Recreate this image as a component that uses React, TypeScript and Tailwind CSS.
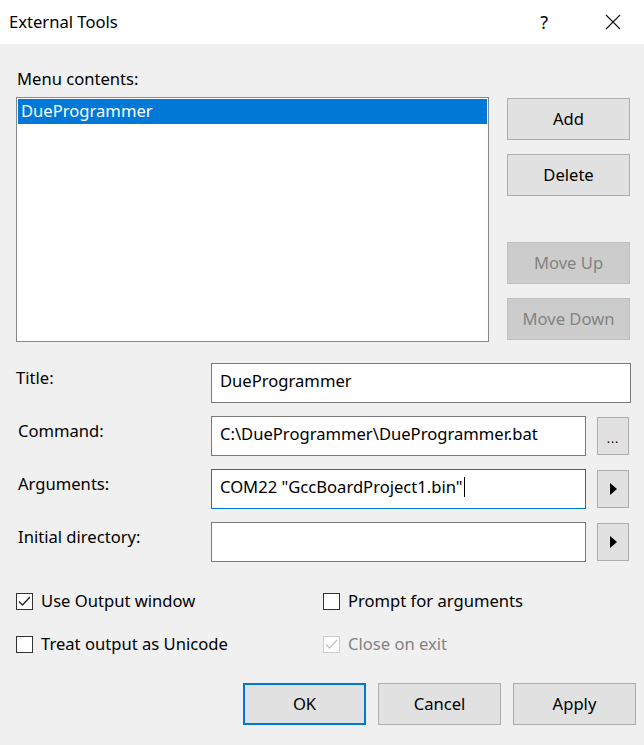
import React from "react";

function DlgButton({ label, disabled = false, primary = false }: { label: string; disabled?: boolean; primary?: boolean }) {
    return (
        <div
            className={
                "flex h-[42px] w-[123px] items-center justify-center " +
                (primary
                    ? "border-2 border-[#0078d7] bg-[#e1e1e1] text-black"
                    : disabled
                      ? "border border-[#bfbfbf] bg-[#cccccc] text-[#838383]"
                      : "border border-[#adadad] bg-[#e1e1e1] text-black")
            }
        >
            {label}
        </div>
    );
}

function SideButton({ kind }: { kind: "dots" | "arrow" }) {
    return (
        <div className="ml-[11px] mt-[1px] flex h-[38px] w-[32px] items-center justify-center border border-[#adadad] bg-[#e1e1e1]">
            {kind === "dots" ? (
                <span className="mt-[6px] text-[12px] leading-none tracking-[1px]">...</span>
            ) : (
                <svg width="7" height="12" viewBox="0 0 7 12">
                    <path d="M0 0 L7 6 L0 12 Z" fill="#000" />
                </svg>
            )}
        </div>
    );
}

function Check({ checked = false, disabled = false, label }: { checked?: boolean; disabled?: boolean; label: string }) {
    return (
        <div className="flex items-center">
            <div
                className={
                    "flex h-[17px] w-[17px] items-center justify-center border bg-white " +
                    (disabled ? "border-[#cccccc]" : "border-[#333333]")
                }
            >
                {checked && (
                    <svg width="13" height="11" viewBox="0 0 13 11">
                        <path d="M1 5.5 L4.5 9 L12 1" fill="none" stroke={disabled ? "#c4c4c4" : "#222"} strokeWidth="1.3" />
                    </svg>
                )}
            </div>
            <span className={"ml-[8px] " + (disabled ? "text-[#838383]" : "text-black")}>{label}</span>
        </div>
    );
}

export default function App() {
    return (
        <div className="h-[745px] w-[644px] overflow-hidden bg-[#f0f0f0] font-['Noto_Sans',sans-serif] text-[16.6px] leading-[22px] text-black">
            {/* title bar */}
            <div className="flex h-[44px] items-center bg-white pl-[9px]">
                <span className="flex-1">External Tools</span>
                <span className="mr-[57px] text-[18px]">?</span>
                <svg width="16" height="16" viewBox="0 0 16 16" className="mr-[23px]">
                    <path d="M1 1 L15 15 M15 1 L1 15" stroke="#111" strokeWidth="1.1" />
                </svg>
            </div>

            <div className="pl-[16px]">
                <div className="mt-[24px] pl-[1px]">Menu contents:</div>

                <div className="mt-[7px] flex">
                    <div className="h-[245px] w-[473px] border border-[#828790] bg-white p-[1px]">
                        <div className="h-[25px] bg-[#0078d7] pl-[3px] pt-[1px] text-white">DueProgrammer</div>
                    </div>
                    <div className="ml-[18px] mt-[1px] flex flex-col">
                        <DlgButton label="Add" />
                        <div className="mt-[14px]">
                            <DlgButton label="Delete" />
                        </div>
                        <div className="mt-[46px]">
                            <DlgButton label="Move Up" disabled />
                        </div>
                        <div className="mt-[14px]">
                            <DlgButton label="Move Down" disabled />
                        </div>
                    </div>
                </div>

                {/* form */}
                <div className="mt-[21px] flex flex-col gap-[13px]">
                    <div className="flex">
                        <div className="w-[195px] pt-[4px]">Title:</div>
                        <div className="h-[40px] w-[420px] border border-[#7a7a7a] bg-white pl-[8px] pt-[6px]">DueProgrammer</div>
                    </div>
                    <div className="flex">
                        <div className="w-[195px] pl-[2px] pt-[4px]">Command:</div>
                        <div className="h-[40px] w-[375px] border border-[#7a7a7a] bg-white pl-[8px] pt-[6px]">
                            C:\DueProgrammer\DueProgrammer.bat
                        </div>
                        <SideButton kind="dots" />
                    </div>
                    <div className="flex">
                        <div className="w-[195px] pl-[2px] pt-[4px]">Arguments:</div>
                        <div className="flex h-[40px] w-[375px] items-start border border-[#0078d7] bg-white pl-[8px] pt-[6px]">
                            <span>COM22 "GccBoardProject1.bin"</span>
                            <span className="ml-[1px] mt-[1px] h-[20px] w-[1px] bg-black" />
                        </div>
                        <SideButton kind="arrow" />
                    </div>
                    <div className="flex">
                        <div className="w-[195px] pl-[2px] pt-[4px]">Initial directory:</div>
                        <div className="h-[40px] w-[375px] border border-[#7a7a7a] bg-white" />
                        <SideButton kind="arrow" />
                    </div>
                </div>

                {/* options */}
                <div className="mt-[28px] grid grid-cols-[307px_1fr] gap-y-[21px]">
                    <Check checked label="Use Output window" />
                    <Check label="Prompt for arguments" />
                    <Check label="Treat output as Unicode" />
                    <Check checked disabled label="Close on exit" />
                </div>

                {/* bottom buttons */}
                <div className="mt-[28px] flex justify-end gap-[12px] pr-[8px]">
                    <DlgButton label="OK" primary />
                    <DlgButton label="Cancel" />
                    <DlgButton label="Apply" />
                </div>
            </div>
        </div>
    );
}
